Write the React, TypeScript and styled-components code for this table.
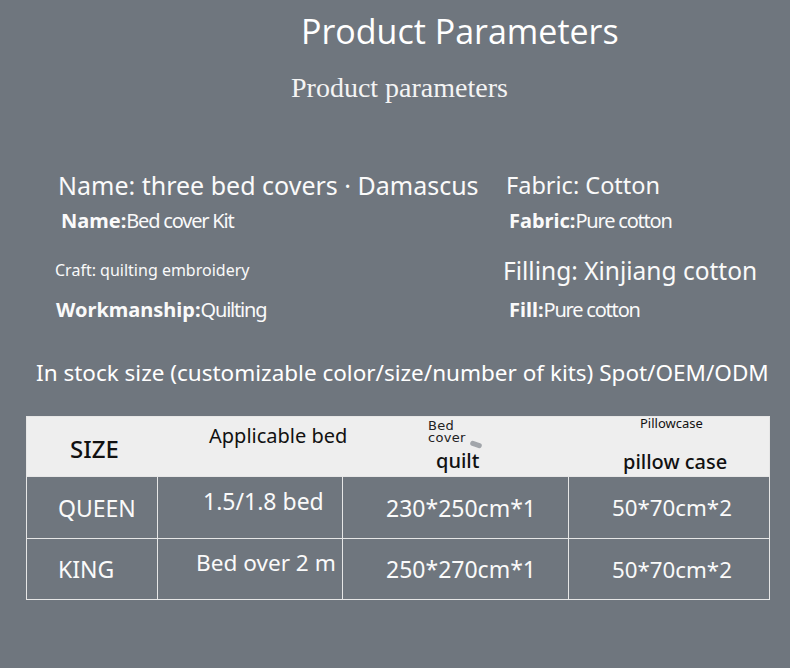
import React from "react";
import styled, { createGlobalStyle } from "styled-components";

const Global = createGlobalStyle`
  html, body { margin: 0; padding: 0; background: #6f767e; }
  body { font-family: "Noto Sans", "Open Sans", sans-serif; color: #fff; }
`;

const Page = styled.div`
  width: 790px;
  height: 668px;
  background: #6f767e;
  overflow: hidden;
  display: flex;
  flex-direction: column;
`;

const Title = styled.h1`
  margin: 11px 0 0 301px;
  font-family: "Open Sans", "Noto Sans", sans-serif;
  font-weight: 400;
  font-size: 34px;
  line-height: 40px;
  color: #fff;
`;

const Subtitle = styled.h2`
  margin: 22px 0 0 291px;
  font-family: "Liberation Serif", serif;
  font-weight: 400;
  font-size: 28px;
  line-height: 30px;
  color: #f4f4f4;
`;

const Params = styled.div`
  margin: 67px 0 0 0;
  display: grid;
  grid-template-columns: 448px 1fr;
  grid-template-rows: 35px 50px 39px 40px;
  padding-left: 55px;
`;

const Cell = styled.div<{ $dx?: number }>`
  display: flex;
  align-items: center;
  height: 30px;
  padding-left: ${(p) => p.$dx ?? 0}px;
  white-space: nowrap;
`;

const Main = styled.span<{ $size: number }>`
  font-size: ${(p) => p.$size}px;
  color: #fafafa;
`;

const Label = styled.span`
  font-size: 20px;
  font-weight: 700;
  color: #fafafa;
`;

const Value = styled.span`
  font-size: 20px;
  letter-spacing: -1.2px;
  color: #fafafa;
`;

const Stock = styled.p`
  margin: 24px 0 0 36px;
  font-size: 22.5px;
  line-height: 30px;
  color: #fff;
  white-space: nowrap;
`;

const Table = styled.div`
  margin: 28px 0 0 26px;
  width: 744px;
  display: grid;
  grid-template-columns: 130px 185px 226px 1fr;
  grid-template-rows: 59px 62px 61px;
  border: 1px solid #e6e6e6;
  box-sizing: border-box;
`;

const Head = styled.div`
  background: #eeeeee;
  color: #111;
  position: relative;
`;

const HeadText = styled.span<{ $x: number; $y: number; $size: number; $w?: number }>`
  position: absolute;
  z-index: 1;
  left: ${(p) => p.$x}px;
  top: ${(p) => p.$y}px;
  font-size: ${(p) => p.$size}px;
  font-weight: ${(p) => p.$w ?? 400};
  line-height: 1;
  white-space: nowrap;
`;

// the little hand-written "Bed cover" note above "quilt"
const Scribble = styled.span<{ $y: number }>`
  position: absolute;
  left: 86px;
  top: ${(p) => p.$y}px;
  font-family: "DejaVu Sans", sans-serif;
  font-size: 13px;
  line-height: 11px;
  letter-spacing: 0.3px;
  color: #222;
`;

const Smudge = styled.span`
  position: absolute;
  left: 128px;
  top: 25px;
  width: 12px;
  height: 5px;
  border-radius: 3px;
  background: #8d9298;
  transform: rotate(20deg);
  opacity: 0.8;
`;

const Body = styled.div<{ $first?: boolean }>`
  border-top: 1px solid #e6e6e6;
  border-left: ${(p) => (p.$first ? "none" : "1px solid #e6e6e6")};
  display: flex;
  align-items: center;
  color: #fafafa;
  white-space: nowrap;
`;

const BodyText = styled.span<{ $x: number; $y?: number; $size?: number }>`
  margin-left: ${(p) => p.$x}px;
  transform: translateY(${(p) => p.$y ?? 0}px);
  font-size: ${(p) => p.$size ?? 23}px;
`;

export default function App() {
  return (
    <Page>
      <Global />
      <Title>Product Parameters</Title>
      <Subtitle>Product parameters</Subtitle>
      <Params>
        <Cell $dx={3}>
          <Main $size={25}>Name: three bed covers · Damascus</Main>
        </Cell>
        <Cell $dx={3}>
          <Main $size={23.5}>Fabric: Cotton</Main>
        </Cell>
        <Cell $dx={6}>
          <Label>Name:</Label>
          <Value>Bed cover Kit</Value>
        </Cell>
        <Cell $dx={6}>
          <Label>Fabric:</Label>
          <Value>Pure cotton</Value>
        </Cell>
        <Cell $dx={-2}>
          <Main $size={16}>Craft: quilting embroidery</Main>
        </Cell>
        <Cell $dx={0}>
          <Main $size={24.5}>Filling: Xinjiang cotton</Main>
        </Cell>
        <Cell $dx={1}>
          <Label>Workmanship:</Label>
          <Value>Quilting</Value>
        </Cell>
        <Cell $dx={6}>
          <Label>Fill:</Label>
          <Value>Pure cotton</Value>
        </Cell>
      </Params>
      <Stock>In stock size (customizable color/size/number of kits) Spot/OEM/ODM</Stock>
      <Table>
        <Head>
          <HeadText $x={43} $y={20} $size={24} $w={500}>SIZE</HeadText>
        </Head>
        <Head>
          <HeadText $x={52} $y={9} $size={20}>Applicable bed</HeadText>
        </Head>
        <Head>
          <Scribble $y={3}>Bed</Scribble>
          <Scribble $y={15}>cover</Scribble>
          <Smudge />
          <HeadText $x={94} $y={34} $size={20} $w={500}>quilt</HeadText>
        </Head>
        <Head>
          <HeadText $x={72} $y={0} $size={13}>Pillowcase</HeadText>
          <HeadText $x={55} $y={35} $size={20} $w={500}>pillow case</HeadText>
        </Head>

        <Body $first>
          <BodyText $x={31} $size={23}>QUEEN</BodyText>
        </Body>
        <Body>
          <BodyText $x={45} $y={-7} $size={23}>1.5/1.8 bed</BodyText>
        </Body>
        <Body>
          <BodyText $x={43}>230*250cm*1</BodyText>
        </Body>
        <Body>
          <BodyText $x={43} $size={22.3}>50*70cm*2</BodyText>
        </Body>

        <Body $first>
          <BodyText $x={31} $size={23}>KING</BodyText>
        </Body>
        <Body>
          <BodyText $x={38} $y={-7} $size={22.6}>Bed over 2 m</BodyText>
        </Body>
        <Body>
          <BodyText $x={43}>250*270cm*1</BodyText>
        </Body>
        <Body>
          <BodyText $x={43} $size={22.3}>50*70cm*2</BodyText>
        </Body>
      </Table>
    </Page>
  );
}
